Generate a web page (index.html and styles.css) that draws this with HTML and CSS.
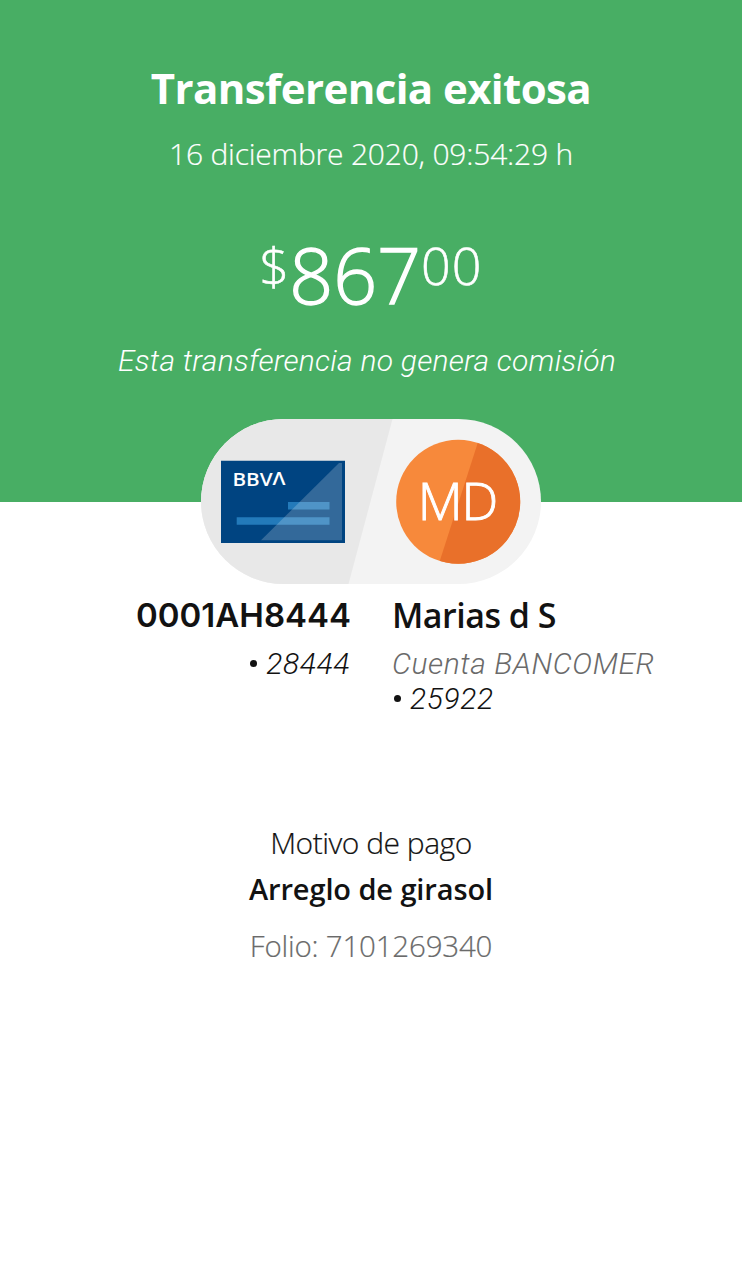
FILE: index.html
```html
<!DOCTYPE html>
<html lang="es">
<head>
<meta charset="utf-8">
<title>Transferencia exitosa</title>
<link rel="stylesheet" href="styles.css">
</head>
<body>
<header class="summary">
  <h1 class="title">Transferencia exitosa</h1>
  <p class="date">16 diciembre 2020, 09:54:29 h</p>
  <div class="amount"><span class="minor">$</span><span class="major">867</span><span class="minor cents">00</span></div>
  <p class="fee">Esta transferencia no genera comisión</p>
</header>
<main>
  <svg class="pill" viewBox="201 419 340 165" role="img" aria-label="De tarjeta BBVA a MD">
    <defs>
      <clipPath id="pill"><rect x="201" y="419" width="340" height="165" rx="82.5"/></clipPath>
      <clipPath id="avatar"><circle cx="458.2" cy="501.8" r="62"/></clipPath>
    </defs>
    <g clip-path="url(#pill)">
      <path fill="#f3f3f3" d="M201 419h340v165H201z"/>
      <path fill="#e8e8e8" d="M201 419h191.500l-44 165H201z"/>
    </g>
    <path fill="#004481" d="M221 460.700h124v82.300H221z"/>
    <path fill="#237aba" d="M288 502h41.500v7.500H288zM236.700 517.300h92.800v7.500h-92.800z"/>
    <path fill="#fff" opacity=".2" d="M339 463h3v77.300h-81z"/>
    <text class="logo" x="232.500" y="486.200" textLength="53" lengthAdjust="spacingAndGlyphs">BBV<tspan dy="-1">Λ</tspan></text>
    <g clip-path="url(#avatar)">
      <path fill="#f7893b" d="M396 439h125v126H396z"/>
      <path fill="#e9702a" d="M479 439h43v126h-83.500z"/>
    </g>
    <text class="initials" x="457.500" y="520">MD</text>
  </svg>
  <section class="parties">
    <div class="from">
      <h2 class="name code">0001AH8444</h2>
      <p class="account"><span class="dot"></span>28444</p>
    </div>
    <div class="to">
      <h2 class="name">Marias d S</h2>
      <p class="account bank">Cuenta BANCOMER</p>
      <p class="account"><span class="dot"></span>25922</p>
    </div>
  </section>
  <section class="details">
    <p class="label">Motivo de pago</p>
    <p class="reason">Arreglo de girasol</p>
    <p class="folio">Folio: 7101269340</p>
  </section>
</main>
</body>
</html>
```

FILE: styles.css
```css
* { box-sizing: border-box; }
body { margin: 0; background: #fff; color: #121212; font-family: "Open Sans", "Noto Sans", sans-serif; font-weight: 300; }
h1, h2, p { margin: 0; white-space: nowrap; }

.summary { height: 502px; padding-top: 58px; background: #48ae64; color: #fff; text-align: center; }
.title { font-size: 42px; line-height: 60px; font-weight: 700; letter-spacing: -.6px; }
.date { margin-top: 16px; font-size: 30px; line-height: 40px; letter-spacing: -.2px; -webkit-text-stroke: .2px; }
.amount { display: flex; justify-content: center; align-items: flex-start; margin-top: 61px; height: 80px; }
.major { font-size: 77px; line-height: 80px; -webkit-text-stroke: 1.3px; }
.minor { font-size: 52px; line-height: 59px; -webkit-text-stroke: .6px; }
.cents { letter-spacing: 1px; }
.fee { margin-top: 26px; padding-right: 8px; font: italic 300 30px/40px Roboto, sans-serif; letter-spacing: .25px; }

.pill { display: block; position: relative; width: 340px; height: 165px; margin: -83px auto 0; }
.logo { font: 600 18px "Open Sans", sans-serif; fill: #fff; }
.initials { font: 300 52px "Open Sans", sans-serif; fill: #fff; stroke: #fff; stroke-width: .9px; text-anchor: middle; letter-spacing: -1px; }

.parties { display: grid; grid-template-columns: 351px 1fr; column-gap: 41px; padding-top: 13px; height: 177px; }
.from { text-align: right; }
.name { font-size: 34px; line-height: 36px; font-weight: 600; letter-spacing: -.5px; }
.code { font-family: Inter, sans-serif; font-size: 33px; letter-spacing: 0; }
.account { font: italic 300 30px/35px Roboto, sans-serif; letter-spacing: .6px; }
.name + .account { margin-top: 13px; }
.from .account { padding-right: 1px; }
.dot { display: inline-block; width: 7px; height: 7px; margin: 0 9px 7px 2px; border-radius: 50%; background: currentColor; vertical-align: baseline; }
.bank { color: #6a6a6a; }

.details { padding-top: 62px; text-align: center; }
.label { font-size: 30px; line-height: 40px; letter-spacing: -.5px; -webkit-text-stroke: .2px; }
.reason { margin-top: 6px; font-size: 29px; line-height: 40px; font-weight: 600; letter-spacing: -.1px; }
.folio { margin-top: 17px; font-size: 29.5px; line-height: 40px; letter-spacing: -.2px; color: #6a6a6a; -webkit-text-stroke: .2px; }
```
